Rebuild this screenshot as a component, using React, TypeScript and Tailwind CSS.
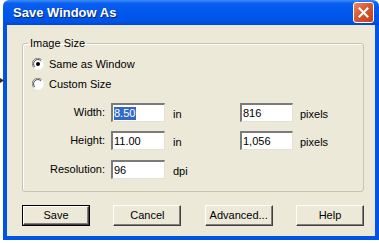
import React from 'react';

const font = "font-['Liberation_Sans',Arial,sans-serif]";

function Radio({ checked }: { checked?: boolean }) {
  return (
    <svg width="12" height="12" viewBox="0 0 12 12" className="shrink-0">
      <circle cx="6" cy="6" r="5.5" fill="#ffffff" />
      <path d="M1.8 9.6 A5 5 0 0 1 9.6 1.8" stroke="#808080" strokeWidth="1" fill="none" />
      <path d="M2.8 8.8 A4 4 0 0 1 8.8 2.8" stroke="#404040" strokeWidth="1" fill="none" />
      <path d="M10.2 2.4 A5 5 0 0 1 2.4 10.2" stroke="#f4f3ee" strokeWidth="1" fill="none" />
      {checked && <circle cx="6" cy="6" r="2" fill="#000000" />}
    </svg>
  );
}

function Field({ value, selected, w }: { value: string; selected?: boolean; w: string }) {
  return (
    <div
      className={`${w} h-[19px] bg-white border-t-2 border-l-2 border-r border-b border-t-[#7b7b7b] border-l-[#7b7b7b] border-r-[#e4e2d6] border-b-[#e4e2d6] flex items-center pl-[1px] text-[11px] leading-[13px] text-black`}
    >
      {selected ? <span className="bg-[#316ac5] text-white pr-[1px]">{value}</span> : <span>{value}</span>}
    </div>
  );
}

function Button({ label, isDefault }: { label: string; isDefault?: boolean }) {
  return (
    <div className={`w-[68px] h-[21px] ${isDefault ? 'border border-black' : ''}`}>
      <div className="w-full h-full bg-[#ece9d8] border border-t-white border-l-white border-r-[#404040] border-b-[#404040] shadow-[inset_-1px_-1px_0_#808080] flex items-center justify-center text-[11px] text-black">
        {label}
      </div>
    </div>
  );
}

function SizeRow({ label, a, b, unit, selected }: { label: string; a: string; b?: string; unit: string; selected?: boolean }) {
  return (
    <div className="flex items-center h-[19px]">
      <span className="w-[82px] text-right text-[11px] text-black">{label}</span>
      <div className="ml-[6px]">
        <Field value={a} selected={selected} w="w-[54px]" />
      </div>
      <span className="ml-[8px] w-[67px] pt-[4px] text-[11px] text-black">{unit}</span>
      {b && (
        <>
          <Field value={b} w="w-[53px]" />
          <span className="ml-[7px] pt-[4px] text-[11px] text-black">pixels</span>
        </>
      )}
    </div>
  );
}

export default function App() {
  return (
    <div className={`relative w-[379px] h-[243px] bg-white overflow-hidden ${font}`}>
      <svg className="absolute left-0 top-[77px]" width="5" height="7" viewBox="0 0 5 7">
        <path d="M0 1 L4 3.5 L0 6 Z" fill="#3a2a22" />
      </svg>
      <div className="ml-[3px] w-[376px]">
        <div className="h-[25px] flex items-center justify-between pl-[10px] pr-[5px] rounded-t-[6px] bg-[linear-gradient(to_bottom,#3d8cf5_0%,#0a5fef_14%,#0058ee_45%,#0054e6_85%,#0048d6_100%)]">
          <span className="text-white font-bold text-[13px] leading-none [text-shadow:1px_1px_0_#0a246a]">Save Window As</span>
          <div className="w-[21px] h-[21px] rounded-[3px] border border-white bg-[linear-gradient(135deg,#e8876a_0%,#d65a35_45%,#c2401b_100%)] flex items-center justify-center">
            <svg width="11" height="11" viewBox="0 0 11 11">
              <path d="M1.5 1.5 L9.5 9.5 M9.5 1.5 L1.5 9.5" stroke="#ffffff" strokeWidth="2" strokeLinecap="square" />
            </svg>
          </div>
        </div>
        <div className="border-x-4 border-b-4 border-[#0054e3]">
          <div className="h-[211px] bg-[#ece9d8] pl-[15px] pt-[12px]">
            <fieldset className="w-[342px] border border-[#c7c4b4] rounded-[3px] pb-[12px] shadow-[inset_1px_1px_0_#fff]">
              <legend className="ml-[5px] px-[2px] text-[11px] leading-[13px] text-black">Image Size</legend>
              <div className="pt-[4px] pl-[9px]">
                <div className="h-[20px] flex items-center gap-[5px] text-[11px] text-black">
                  <Radio checked />
                  <span>Same as Window</span>
                </div>
                <div className="h-[20px] flex items-center gap-[5px] text-[11px] text-black">
                  <Radio />
                  <span>Custom Size</span>
                </div>
              </div>
              <div className="mt-[9px] flex flex-col gap-[9px]">
                <SizeRow label="Width:" a="8.50" b="816" unit="in" selected />
                <SizeRow label="Height:" a="11.00" b="1,056" unit="in" />
                <div className="mt-[1px]">
                  <SizeRow label="Resolution:" a="96" unit="dpi" />
                </div>
              </div>
            </fieldset>
            <div className="mt-[13px] w-[342px] flex justify-between">
              <Button label="Save" isDefault />
              <Button label="Cancel" />
              <Button label="Advanced..." />
              <Button label="Help" />
            </div>
          </div>
        </div>
      </div>
    </div>
  );
}
